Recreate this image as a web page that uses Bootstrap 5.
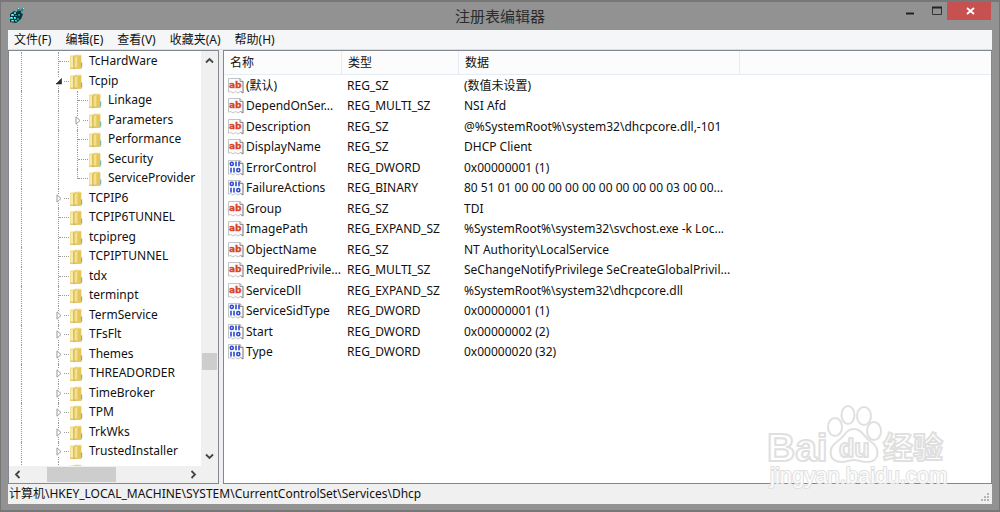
<!DOCTYPE html>
<html lang="zh-CN">
<head>
<meta charset="utf-8">
<meta name="viewport" content="width=device-width, initial-scale=1">
<title>注册表编辑器</title>
<link href="https://cdn.jsdelivr.net/npm/bootstrap@5.3.0/dist/css/bootstrap.min.css" rel="stylesheet">
<style>
  body { font: 12px/18px "Noto Sans", "Noto Sans CJK SC", sans-serif; color: #111; background: #929292; border: 1px solid #777; border-top-width: 2px; border-bottom-width: 2px; }
  button { border: 0; padding: 0; background: none; color: inherit; }
  svg { display: block; flex: none; }
  .titlebar { height: 28px; padding: 0 24px 0 7px; }
  .titlebar h1 { font-size: 15px; line-height: 28px; color: #2b2b2b; }
  .win-btn { width: 26px; height: 20px; }
  .win-close { width: 44px; height: 18px; background: #c75050; }
  .frame { margin: 0 7px 6px; background: #f0f0f0; min-height: 0; }
  .menubar { height: 21px; background: #f5f6f7; border-bottom: 1px solid #ddd; padding-left: 6px; gap: 14px; }
  .pane { background: #fff; border: 1px solid #828790; }
  .tree-pane { width: 211px; }
  .scroll-y { width: 17px; background: #f0f0f0; padding: 5px 0; }
  .scroll-x { height: 17px; background: #f0f0f0; padding: 0 20px 0 4px; }
  .thumb-y { height: 17px; width: 15px; background: #cdcdcd; }
  .thumb-x { height: 15px; width: 69px; background: #cdcdcd; }
  .tree-rows { padding: 1px 0 0 12px; background: #fff; }
  .tree-row { height: 20px; }
  .tree-row:nth-child(even) { height: 19px; }
  .trunk { width: 37px; border-left: 1px dotted #999; }
  .limb { width: 19px; border-left: 1px dotted #999; }
  .stub { width: 11px; border-left: 1px dotted #999; }
  .stub::after { content: ""; position: absolute; top: 9px; left: 0; right: 0; border-top: 1px dotted #999; }
  .stub.corner { border-left-color: transparent; }
  .stub.corner::before { content: ""; position: absolute; top: 0; left: -1px; height: 10px; border-left: 1px dotted #999; }
  .expander { position: absolute; left: -4px; top: 5px; z-index: 1; background: #fff; }
  .key-icon { margin-top: 2px; }
  .tree-label { margin-left: 6px; white-space: nowrap; }
  .values { table-layout: fixed; width: 100%; border-collapse: separate; border-spacing: 0; }
  .values th { height: 24px; font-weight: 400; padding: 0 0 0 6px; border-right: 1px solid #e4edf7; border-bottom: 1px solid #e4edf7; background: #fcfcfc; }
  .values th:last-child { border-right: 0; }
  .values td { height: 21px; padding: 0 0 0 5px; white-space: nowrap; }
  .values tr:nth-child(even) td { height: 20px; }
  .values td:first-child { padding-left: 4px; }
  .value-name { padding-left: 2px; }
  .c-name { width: 118px; } .c-type { width: 117px; } .c-data { width: 281px; }
  .statusbar { height: 21px; padding-left: 1px; }
  .watermark { position: absolute; right: 52px; bottom: 16px; }
</style>
</head>
<body class="vh-100 d-flex flex-column overflow-hidden">
<svg class="d-none" aria-hidden="true">
  <symbol id="folder" viewBox="0 0 14 16">
    <path d="M1 2.500Q1 1.500 2 1.500H5L6 .800H11.500Q12.500 .800 12.500 2V14.500H1Z" fill="#eed77e"/>
    <path d="M1.500 2.500H4V14H1.500Z" fill="#f8ecac"/>
    <path d="M4 3L7.500 1.500V14L4.500 15.500Z" fill="#d8b84d"/>
    <path d="M5.500 3L8 2V13.500L5.500 15Z" fill="#f3e08f"/>
    <path d="M8.500 2V13.500H12V2Z" fill="#e4c65d"/>
    <path d="M12 8.500h1.200v5H12z" fill="#6eb7bd"/>
    <path d="M1 14.200H12.500" stroke="#cfaa43" stroke-width=".8"/>
  </symbol>
  <symbol id="sheet" viewBox="0 0 16 16">
    <path d="M.5 .5H12L15 3.500V15L12.500 13.500L10 15L7.500 13.500L5 15L2.500 13.500L.5 14.200Z" fill="#fbfbfb" stroke="#c4c4c4"/>
    <path d="M12 .5V3.500H15V15L12.500 13.500" fill="none" stroke="#8f8f8f"/>
  </symbol>
  <symbol id="string" viewBox="0 0 16 16">
    <use href="#sheet"/>
    <text x="1" y="10" font-family="DejaVu Sans" font-weight="700" font-size="9" fill="#d9431f" stroke="#d9431f" stroke-width=".3">ab</text>
  </symbol>
  <symbol id="binary" viewBox="0 0 16 16">
    <use href="#sheet"/>
    <g fill="none" stroke="#2b4bd0" stroke-width="1.600"><rect x="2.300" y="2.300" width="3" height="3.200" rx="1.400"/><path d="M8 1.500V6.300M11 1.500V6.300M3 7.700V12.500M6 7.700V12.500"/><rect x="8.800" y="8.500" width="3" height="3.200" rx="1.400"/></g>
  </symbol>
  <symbol id="closed" viewBox="0 0 8 9"><path d="M2 .800L6 4.500L2 8.200Z" fill="#fff" stroke="#999"/></symbol>
  <symbol id="open" viewBox="0 0 8 9"><path d="M6.500 1.500V7H1Z" fill="#333" stroke="#222" stroke-width=".6"/></symbol>
</svg>

<header class="titlebar d-flex position-relative">
  <svg width="17" height="17" viewBox="0 0 17 17" class="mt-1" aria-hidden="true">
    <path d="M2 8L6 5L9 6L10 4L13 5V7L15 8L13 13L8 17L2 16Z" fill="#06363b"/>
    <path d="M3 8h3v2H3zM6 6h2v2H6zM2 11h3v2H2zM6 11h2v2H6zM3 14h3v1.500H3zM7 14h2v1.500H7z" fill="#2fd0d2"/>
    <path d="M7 9h2v1H7zM10 8h2v2h-2zM9 12h2v2H9zM12 4l3-2 1 1-2 3zM9 3l2-1 1 3h-2z" fill="#128a91"/>
    <path d="M4 8h1v1H4zM3 11h1v1H3zM6 11h1v1H6zM4 14h1v1H4zM10 2h1v1h-1zM15 2h1v1h-1z" fill="#9bf3f2"/>
  </svg>
  <h1 class="flex-fill text-center m-0 fw-normal">注册表编辑器</h1>
  <div class="position-absolute end-0 top-0 d-flex pe-2">
    <button class="win-btn" aria-label="最小化"><svg width="26" height="20" viewBox="0 0 26 20"><path d="M11 11.500h8" stroke="#222" stroke-width="2"/></svg></button>
    <button class="win-btn" aria-label="最大化"><svg width="26" height="20" viewBox="0 0 26 20"><path d="M11.500 5.500h9v7h-9z" fill="none" stroke="#333"/><path d="M11 5.500h10" stroke="#222" stroke-width="2"/></svg></button>
    <button class="win-close" aria-label="关闭"><svg width="44" height="18" viewBox="0 0 44 18"><path d="M20 6l7 6M27 6l-7 6" stroke="#fff" stroke-width="1.800"/></svg></button>
  </div>
</header>

<div class="frame flex-fill d-flex flex-column">
  <nav class="menubar d-flex align-items-center" aria-label="菜单">
    <button>文件(F)</button><button>编辑(E)</button><button>查看(V)</button><button>收藏夹(A)</button><button>帮助(H)</button>
  </nav>
  <main class="flex-fill d-flex gap-1 overflow-hidden">
    <section class="pane tree-pane d-flex flex-column flex-shrink-0">
      <div class="d-flex flex-fill overflow-hidden">
        <div class="tree-rows flex-fill overflow-hidden" id="tree" role="tree"></div>
        <div class="scroll-y d-flex flex-column align-items-center flex-shrink-0">
          <button aria-label="向上"><svg width="9" height="9" viewBox="0 0 9 9"><path d="M1 6.500L4.500 3L8 6.500" fill="none" stroke="#444" stroke-width="1.800"/></svg></button>
          <div style="flex:287"></div><div class="thumb-y"></div><div style="flex:82"></div>
          <button aria-label="向下"><svg width="9" height="9" viewBox="0 0 9 9"><path d="M1 2.500L4.500 6L8 2.500" fill="none" stroke="#444" stroke-width="1.800"/></svg></button>
        </div>
      </div>
      <div class="scroll-x d-flex align-items-center">
        <button aria-label="向左"><svg width="9" height="9" viewBox="0 0 9 9"><path d="M6.500 1L3 4.500L6.500 8" fill="none" stroke="#444" stroke-width="1.800"/></svg></button>
        <div style="flex:25"></div><div class="thumb-x"></div><div style="flex:72"></div>
        <button aria-label="向右"><svg width="9" height="9" viewBox="0 0 9 9"><path d="M2.500 1L6 4.500L2.500 8" fill="none" stroke="#444" stroke-width="1.800"/></svg></button>
      </div>
    </section>
    <section class="pane flex-fill overflow-hidden">
      <table class="values">
        <colgroup><col class="c-name"><col class="c-type"><col class="c-data"><col></colgroup>
        <thead><tr><th>名称</th><th>类型</th><th>数据</th><th></th></tr></thead>
        <tbody id="values"></tbody>
      </table>
    </section>
  </main>
  <footer class="statusbar d-flex align-items-center justify-content-between">
    <span>计算机\HKEY_LOCAL_MACHINE\SYSTEM\CurrentControlSet\Services\Dhcp</span>
    <svg width="12" height="12" viewBox="0 0 12 12" class="align-self-end" aria-hidden="true"><path d="M7 1h2v2H7zM4 4h2v2H4zM7 4h2v2H7zM1 7h2v2H1zM4 7h2v2H4zM7 7h2v2H7z" fill="#b5b5b5"/></svg>
  </footer>
</div>

<svg class="watermark" width="182" height="92" viewBox="0 0 182 92" role="img" aria-label="Baidu 经验">
  <g fill="#fff" stroke="#e0e0e0" stroke-width="2" stroke-linejoin="round">
    <text x="1" y="57" font-family="Liberation Sans" font-weight="700" font-size="39">Bai</text>
    <ellipse cx="69" cy="23" rx="7" ry="9"/><ellipse cx="82" cy="11" rx="6.500" ry="9"/><ellipse cx="98" cy="12" rx="7" ry="9"/><ellipse cx="108" cy="27" rx="7" ry="9"/>
    <path d="M88 25C96 25 98 33 104 37C114 43 115 58 101 58C95 58 93 56 88 56C83 56 81 58 76 58C62 58 61 44 72 37C79 32 80 25 88 25Z"/>
    <text x="73" y="53" font-family="Liberation Sans" font-weight="700" font-size="25">du</text>
    <text x="117" y="54" font-family="Noto Sans CJK SC" font-weight="700" font-size="30">经验</text>
    <text x="4" y="79" font-family="Liberation Sans" font-size="22" paint-order="stroke" fill-opacity=".9">jingyan.baidu.com</text>
  </g>
</svg>

<script>
  // [name, depth, expander state, last child]
  const keys = [["TcHardWare",1],["Tcpip",1,"open"],["Linkage",2],["Parameters",2,"closed"],["Performance",2],["Security",2],["ServiceProvider",2,"",true],
    ["TCPIP6",1,"closed"],["TCPIP6TUNNEL",1],["tcpipreg",1],["TCPIPTUNNEL",1],["tdx",1],["terminpt",1],["TermService",1,"closed"],["TFsFlt",1,"closed"],
    ["Themes",1,"closed"],["THREADORDER",1,"closed"],["TimeBroker",1,"closed"],["TPM",1,"closed"],["TrkWks",1,"closed"],["TrustedInstaller",1,"closed"],["",1]];
  document.getElementById("tree").innerHTML = keys.map(([name, depth, state, last]) =>
    `<div class="tree-row d-flex" role="treeitem"><span class="trunk flex-shrink-0"></span>${depth === 2 ? '<span class="limb flex-shrink-0"></span>' : ""}
     <span class="stub position-relative flex-shrink-0 ${last ? "corner" : ""}">${state ? `<svg class="expander" width="8" height="9"><use href="#${state}"/></svg>` : ""}</span>
     <svg width="14" height="16" class="key-icon"><use href="#folder"/></svg><span class="tree-label">${name}</span></div>`).join("");

  const values = [["(默认)","REG_SZ","(数值未设置)"],["DependOnSer...","REG_MULTI_SZ","NSI Afd"],["Description","REG_SZ","@%SystemRoot%\\system32\\dhcpcore.dll,-101"],
    ["DisplayName","REG_SZ","DHCP Client"],["ErrorControl","REG_DWORD","0x00000001 (1)"],["FailureActions","REG_BINARY","80 51 01 00 00 00 00 00 00 00 00 00 03 00 00..."],
    ["Group","REG_SZ","TDI"],["ImagePath","REG_EXPAND_SZ","%SystemRoot%\\system32\\svchost.exe -k Loc..."],["ObjectName","REG_SZ","NT Authority\\LocalService"],
    ["RequiredPrivile...","REG_MULTI_SZ","SeChangeNotifyPrivilege SeCreateGlobalPrivil..."],["ServiceDll","REG_EXPAND_SZ","%SystemRoot%\\system32\\dhcpcore.dll"],
    ["ServiceSidType","REG_DWORD","0x00000001 (1)"],["Start","REG_DWORD","0x00000002 (2)"],["Type","REG_DWORD","0x00000020 (32)"]];
  document.getElementById("values").innerHTML = values.map(([name, type, data]) =>
    `<tr><td><div class="d-flex align-items-center"><svg width="16" height="16"><use href="#${/DWORD|BINARY/.test(type) ? "binary" : "string"}"/></svg><span class="value-name">${name}</span></div></td><td>${type}</td><td>${data}</td><td></td></tr>`).join("");
</script>
<script src="https://cdn.jsdelivr.net/npm/bootstrap@5.3.0/dist/js/bootstrap.bundle.min.js"></script>
</body>
</html>
